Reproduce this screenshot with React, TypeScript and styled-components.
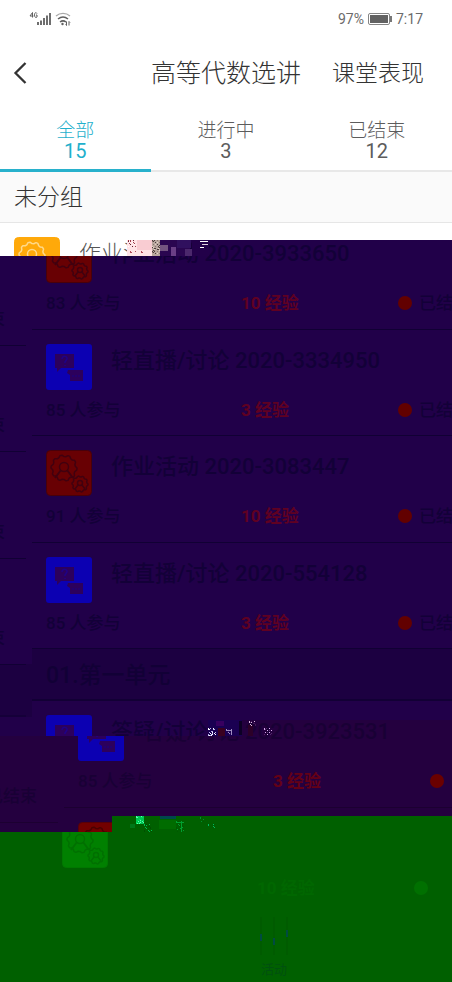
import React from "react";
import styled, { createGlobalStyle, css } from "styled-components";

const Global = createGlobalStyle`
  * { box-sizing: border-box; }
  body {
    margin: 0;
    background: #006000;
    font-family: Roboto, "Noto Sans CJK SC", sans-serif;
  }
  button { border: 0; background: none; padding: 0; font: inherit; color: inherit; }
  h1, h2, h3, p, ul { margin: 0; padding: 0; font-weight: inherit; }
  ul { list-style: none; }
`;

const Screen = styled.main`
  overflow: hidden;
  background: #fff;
`;

const StatusBar = styled.div`
  display: flex;
  justify-content: space-between;
  align-items: center;
  height: 38px;
  padding: 0 29px;
  color: #6b6b6b;
  font-size: 14px;
`;

const StatusGroup = styled.div`
  display: flex;
  align-items: center;
  gap: 4px;
`;

const Header = styled.header`
  display: grid;
  grid-template-columns: 1fr auto 1fr;
  align-items: center;
  height: 72px;
  color: #333;
  font-weight: 300;
`;

const BackButton = styled.button`
  justify-self: start;
  display: flex;
  padding: 0 0 2px 13px;
`;

const Title = styled.h1`
  font-size: 25px;
  line-height: 36px;
`;

const HeaderAction = styled.button`
  justify-self: end;
  padding-right: 28px;
  font-size: 23px;
  line-height: 36px;
  white-space: nowrap;
`;

const Tabs = styled.nav`
  display: grid;
  grid-template-columns: repeat(3, 1fr);
  height: 62px;
`;

const Tab = styled.button<{ $active?: boolean }>`
  display: flex;
  flex-direction: column;
  align-items: center;
  padding-top: 11px;
  font-size: 19px;
  line-height: 20px;
  font-weight: 300;
  color: ${(p) => (p.$active ? "#1fb0cc" : "#5c5c5c")};
  border-bottom: ${(p) => (p.$active ? "3px solid #28b1cc" : "2px solid #e8e8e8")};
`;

const TabCount = styled.span`
  font-size: 20px;
  font-weight: 400;
`;

const GroupTitle = styled.h2`
  height: 51px;
  padding: 0 14px;
  background: #fafafa;
  border-bottom: 1px solid #e6e6e6;
  color: #333;
  font-size: 23px;
  font-weight: 300;
  line-height: 52px;
`;

type Tone = "light" | "indigo" | "plum" | "green";

const tones = {
  light: { bg: "#ffffff", text: "#555555", line: "#e6e6e6", exp: "#f33", dot: "#f33" },
  indigo: { bg: "#210049", text: "#130038", line: "#110034", exp: "#5f0022", dot: "#620000" },
  plum: { bg: "#24003f", text: "#190035", line: "#1c0031", exp: "#640016", dot: "#6a0000" },
  green: { bg: "#006000", text: "#006000", line: "#006000", exp: "#006700", dot: "#007000" },
};

const Stack = styled.section`
  display: grid;
  grid-template-columns: 100%;
  height: 759px;
`;

const Layer = styled.div<{ $tone: Tone; $shift: number; $clip?: string; $start?: number }>`
  grid-area: 1 / 1;
  display: grid;
  grid-template-columns: ${(p) => p.$shift}px 100%;
  align-content: start;
  overflow: hidden;
  padding-top: ${(p) => p.$start ?? 0}px;
  background: ${(p) => tones[p.$tone].bg};
  clip-path: ${(p) => p.$clip ?? "none"};
`;

const Rows = styled.ul`
  grid-column: 2;
`;

const Row = styled.li<{ $tone: Tone; $tall?: boolean }>`
  display: flex;
  flex-direction: column;
  gap: 7px;
  height: ${(p) => (p.$tall ? 107 : 106)}px;
  padding: 14px 14px 0;
  border-bottom: 1px solid ${(p) => tones[p.$tone].line};
  color: ${(p) => tones[p.$tone].text};
  ${(p) => (p.$tone === "light" ? css`font-weight: 300;` : css`font-weight: 500;`)}
`;

const RowHead = styled.div`
  display: flex;
  gap: 19px;
`;

const RowTitle = styled.h3`
  font-size: 22px;
  line-height: 34px;
  white-space: nowrap;
`;

const Meta = styled.div`
  display: grid;
  grid-template-columns: 46% 1fr auto;
  align-items: center;
  font-size: 17px;
  line-height: 26px;
`;

const Exp = styled.span<{ $tone: Tone }>`
  grid-column: 2;
  color: ${(p) => tones[p.$tone].exp};
  font-weight: 700;
`;

const State = styled.span`
  display: flex;
  align-items: center;
  gap: 7px;
  width: 72px;
`;

const Dot = styled.i<{ $tone: Tone }>`
  flex: none;
  width: 14px;
  height: 14px;
  border-radius: 50%;
  background: ${(p) => tones[p.$tone].dot};
`;

const GroupRow = styled.li`
  height: 52px;
  padding: 0 14px;
  background: #1c0041;
  border-bottom: 2px solid #120035;
  color: #120036;
  font-size: 23px;
  font-weight: 500;
  line-height: 54px;
`;

const Spill = styled.div<{ $end?: string }>`
  grid-column: 1;
  grid-row: 1;
  padding-top: 16px;
  padding-right: 6px;
  background: ${(p) => p.$end ?? "none"};
`;

const SpillCell = styled.div<{ $tone: Tone; $tall?: boolean }>`
  display: flex;
  justify-content: flex-end;
  align-items: flex-end;
  height: ${(p) => (p.$tall ? 107 : 106)}px;
  padding: 0 21px 13px 0;
  border-bottom: 1px solid ${(p) => tones[p.$tone].line};
  color: ${(p) => tones[p.$tone].text};
  font-size: 17px;
  font-weight: 500;
  line-height: 26px;
  white-space: nowrap;
`;

const SpillGroup = styled.div`
  height: 52px;
  border-bottom: 2px solid #150039;
`;

const Tile = styled.svg`
  display: block;
  flex: none;
  width: 46px;
  height: 46px;
`;

const TabItem = styled.button`
  display: flex;
  flex-direction: column;
  align-items: center;
  width: 100%;
  color: #00500f;
  font-size: 13px;
  line-height: 20px;
`;

const Noise = styled.svg<{ $x: number; $y: number }>`
  grid-area: 1 / 1;
  display: block;
  z-index: 1;
  margin-left: ${(p) => p.$x}px;
  margin-top: ${(p) => p.$y}px;
`;

function gearPath(cx: number, cy: number, r: number) {
  const points: string[] = [];
  for (let i = 0; i < 40; i++) {
    const a = (i / 40) * Math.PI * 2;
    const radius = i % 4 < 2 ? r : r * 0.88;
    points.push(`${(cx + Math.cos(a) * radius).toFixed(2)} ${(cy + Math.sin(a) * radius).toFixed(2)}`);
  }
  return `M${points.join("L")}Z`;
}

function GearTile({ fill, line, edge }: { fill: string; line: string; edge: string }) {
  return (
    <Tile viewBox="0 0 46 46" aria-hidden="true">
      <rect x=".5" y=".5" width="45" height="45" rx="4" fill={fill} stroke={edge} />
      <g fill="none" stroke={line} strokeWidth="1.5" strokeLinejoin="round">
        <path d={gearPath(18, 18, 13)} />
        <circle cx="18" cy="17" r="4.500" />
        <path d="M9 28l6-8M27 28l-6-8" strokeWidth="2" />
        <path d={gearPath(34, 34, 8)} />
        <circle cx="34" cy="33" r="2.500" />
        <path d="M29 39l3-4M39 39l-3-4" />
      </g>
    </Tile>
  );
}

function ChatTile() {
  return (
    <Tile viewBox="0 0 46 46" aria-hidden="true">
      <rect width="46" height="46" rx="3" fill="#0c00b2" />
      <path d="M9 10h19v14H15l-4 4v-4H9z" fill="#2c005c" />
      <path d="M22 26h15v11H24v-6l-3-2z" fill="#2c005c" />
      <path d="M16 15c0-4 6-3 5 0l-2 3v1M19 21v1" fill="none" stroke="#1f0088" strokeWidth="1.5" />
      <path d="M26 32h2M29 32h2M32 32h2" stroke="#210074" strokeWidth="1.500" />
    </Tile>
  );
}

type Activity = { kind: "gear" | "chat"; title?: string; people?: string; exp?: string; state?: string };

function ActivityRow({ item, tone, tall }: { item: Activity; tone: Tone; tall?: boolean }) {
  const gear = {
    light: ["#ffa90a", "#ffd98a", "#ffa90a"],
    indigo: ["#680003", "#41000f", "#48000a"],
    plum: ["#720000", "#4a0000", "#580008"],
    green: ["#008000", "#007000", "#007800"],
  }[tone];
  return (
    <Row $tone={tone} $tall={tall}>
      <RowHead>
        {item.kind === "gear" ? <GearTile fill={gear[0]} line={gear[1]} edge={gear[2]} /> : <ChatTile />}
        {item.title && <RowTitle>{item.title}</RowTitle>}
      </RowHead>
      {item.exp && (
        <Meta>
          {item.people && <span>{item.people} 人参与</span>}
          <Exp $tone={tone}>{item.exp} 经验</Exp>
          <State>
            <Dot $tone={tone} />
            {item.state && <span>{item.state}</span>}
          </State>
        </Meta>
      )}
    </Row>
  );
}

const activities: Activity[] = [
  { kind: "gear", title: "作业活动 2020-3933650", people: "83", exp: "10", state: "已结束" },
  { kind: "chat", title: "轻直播/讨论 2020-3334950", people: "85", exp: "3", state: "已结束" },
  { kind: "gear", title: "作业活动 2020-3083447", people: "91", exp: "10", state: "已结束" },
  { kind: "chat", title: "轻直播/讨论 2020-554128", people: "85", exp: "3", state: "已结束" },
];
const questionTitle: Activity = { kind: "chat", title: "答疑/讨论 2020-3923531" };
const question: Activity = { ...questionTitle, people: "85", exp: "3" };
const homework: Activity = { kind: "gear", exp: "10" };

type Patch = [x: number, y: number, w: number, h: number, color: string];

function Speckle({ x, y, w, h, colors, seed }: { x: number; y: number; w: number; h: number; colors: string[]; seed: number }) {
  const dots: React.ReactNode[] = [];
  for (let j = 0; j < h; j++)
    for (let i = 0; i < w; i++) {
      const n = (i * 7 + j * 13 + i * j * seed) % 11;
      if (n < 4) dots.push(<rect key={`${i}-${j}`} x={x + i} y={y + j} width="1" height="1" fill={colors[n % colors.length]} />);
    }
  return <>{dots}</>;
}

function Patches({ list }: { list: Patch[] }) {
  return (
    <>
      {list.map(([x, y, w, h, c], i) => (
        <rect key={i} x={x} y={y} width={w} height={h} fill={c} />
      ))}
    </>
  );
}

export default function App() {
  return (
    <Screen>
      <Global />
      <StatusBar>
        <svg width="42" height="16" viewBox="0 0 42 16" fill="none" stroke="#5f5f5f" aria-label="4G">
          <path d="M3.500 1.500L1 5h3.500M3.500 1.500v5M8 2.500C7 1 5.500 1.500 5.500 4s1.500 3 2.500 2V4H7" strokeWidth="1" />
          <path d="M9 11v3M12 9.500V14M15 7v7M18 4.500V14M21 2v12" strokeWidth="1.800" />
          <path d="M27 5c4-3.500 10-3.500 14 0" strokeWidth="1.300" stroke="#aaa" />
          <path d="M29 8c3-2.500 7-2.500 10 0M31 11c2-1.500 4-1.500 6 0" strokeWidth="1.500" />
          <circle cx="33.500" cy="13" r="1.200" fill="#5f5f5f" stroke="none" />
          <path d="M37.500 10.500v4M40 10.500v4M36.500 13.500l1 1M41 11.500l-1-1" strokeWidth="1" />
        </svg>
        <StatusGroup>
          <span>97%</span>
          <svg width="24" height="12" viewBox="0 0 24 12" aria-hidden="true">
            <rect x=".5" y=".5" width="21" height="11" rx="1.500" fill="none" stroke="#858585" />
            <rect x="2" y="2" width="18" height="8" fill="#626262" />
            <path d="M23 3v6" stroke="#777" strokeWidth="2" />
          </svg>
          <span>7:17</span>
        </StatusGroup>
      </StatusBar>

      <Header>
        <BackButton aria-label="返回">
          <svg width="14" height="22" viewBox="0 0 14 22" fill="none" stroke="#333" strokeWidth="2.300">
            <path d="M12.500 1L2.500 11l10 10" />
          </svg>
        </BackButton>
        <Title>高等代数选讲</Title>
        <HeaderAction>课堂表现</HeaderAction>
      </Header>

      <Tabs>
        <Tab $active>
          全部<TabCount>15</TabCount>
        </Tab>
        <Tab>
          进行中<TabCount>3</TabCount>
        </Tab>
        <Tab>
          已结束<TabCount>12</TabCount>
        </Tab>
      </Tabs>
      <GroupTitle>未分组</GroupTitle>

      <Stack>
        <Layer $tone="indigo" $shift={32}>
          <Spill $end="linear-gradient(transparent 441px, #1c0041 441px, #1c0041 494px, transparent 494px)">
            {activities.map((_, i) => (
              <SpillCell key={i} $tone="indigo" $tall={i % 2 === 0}>束</SpillCell>
            ))}
            <SpillGroup />
          </Spill>
          <Rows>
            {activities.map((item, i) => (
              <ActivityRow key={i} item={item} tone="indigo" tall={i % 2 === 0} />
            ))}
            <GroupRow>01.第一单元</GroupRow>
            <ActivityRow item={questionTitle} tone="indigo" />
          </Rows>
        </Layer>

        <Layer
          $tone="plum"
          $shift={64}
          $start={478}
          $clip="polygon(208px 497px, 100% 497px, 100% 100%, 0 100%, 0 513px, 208px 513px)"
        >
          <Spill>
            <SpillCell $tone="plum">已结束</SpillCell>
          </Spill>
          <Rows>
            <ActivityRow item={question} tone="plum" tall />
            <ActivityRow item={{ kind: "gear" }} tone="plum" />
          </Rows>
        </Layer>

        <Layer
          $tone="green"
          $shift={48}
          $start={585}
          $clip="polygon(112px 593px, 100% 593px, 100% 100%, 0 100%, 0 609px, 112px 609px)"
        >
          <Rows>
            <ActivityRow item={homework} tone="green" />
            <li>
              <TabItem>
                <svg width="32" height="46" viewBox="0 0 32 46" fill="none" aria-hidden="true">
                  <path d="M3 3v38M16 3v38M29 3v38" stroke="#005600" />
                  <path d="M3 20v7M16 24v7M29 16v7" stroke="#004b40" strokeWidth="2" />
                </svg>
                活动
              </TabItem>
            </li>
          </Rows>
        </Layer>

        <Layer
          $tone="light"
          $shift={0}
          $clip="polygon(0 0, 100% 0, 100% 17px, 150px 17px, 150px 33px, 0 33px)"
        >
          <Rows>
            <ActivityRow item={{ kind: "gear", title: "作业活动" }} tone="light" />
          </Rows>
        </Layer>

        <Noise $x={127} $y={17} width="82" height="16" viewBox="0 0 82 16" aria-hidden="true">
          <Patches
            list={[
              [0, 0, 25, 16, "#ffe3e6"],
              [10, 0, 15, 10, "#f9ccd2"],
              [25, 0, 8, 16, "#b9a79e"],
              [33, 0, 30, 16, "#2a0650"],
              [33, 5, 8, 6, "#735480"],
              [44, 7, 5, 9, "#6a3f85"],
              [50, 0, 14, 8, "#30105e"],
              [58, 9, 7, 7, "#4b286c"],
              [65, 0, 17, 16, "#220049"],
              [73, 1, 8, 1, "#fff"],
              [75, 4, 6, 1, "#dcd"],
              [73, 7, 4, 1, "#fff"],
            ]}
          />
          <Speckle x={1} y={0} w={8} h={7} colors={["#a13b49", "#fff", "#612234"]} seed={3} />
          <Speckle x={3} y={11} w={13} h={3} colors={["#b14b59", "#ffe3e6"]} seed={2} />
          <Speckle x={25} y={0} w={8} h={14} colors={["#4a3b3a", "#e8d6c8", "#8d7670"]} seed={5} />
        </Noise>

        <Noise $x={208} $y={497} width="66" height="16" viewBox="0 0 66 16" aria-hidden="true">
          <Patches
            list={[
              [0, 0, 34, 16, "#1a0052"],
              [8, 1, 8, 5, "#380060"],
              [10, 8, 7, 8, "#39001f"],
              [31, 1, 3, 14, "#0c0025"],
              [40, 5, 5, 11, "#2c0028"],
            ]}
          />
          <Speckle x={0} y={8} w={8} h={8} colors={["#fff", "#bcb8ee"]} seed={2} />
          <Speckle x={18} y={9} w={6} h={6} colors={["#9f8cc0", "#311060"]} seed={4} />
          <Speckle x={41} y={1} w={7} h={6} colors={["#d9b9df", "#461856"]} seed={3} />
          <Speckle x={56} y={8} w={8} h={7} colors={["#d9a9ef", "#54286c"]} seed={5} />
        </Noise>

        <Noise $x={128} $y={593} width="90" height="16" viewBox="0 0 90 16" aria-hidden="true">
          <Patches
            list={[
              [8, 0, 8, 8, "#00c654"],
              [32, 0, 16, 3, "#00484c"],
              [31, 4, 17, 9, "#006c00"],
              [2, 8, 5, 4, "#007717"],
            ]}
          />
          <Speckle x={8} y={0} w={8} h={8} colors={["#58ffac", "#00e05a"]} seed={2} />
          <Speckle x={16} y={8} w={8} h={8} colors={["#00bd50", "#005000"]} seed={3} />
          <Speckle x={48} y={5} w={8} h={11} colors={["#00a030", "#005800"]} seed={4} />
          <Speckle x={72} y={1} w={5} h={5} colors={["#009030", "#005800"]} seed={5} />
          <Speckle x={80} y={8} w={8} h={4} colors={["#00b860", "#006000"]} seed={6} />
        </Noise>
      </Stack>
    </Screen>
  );
}
